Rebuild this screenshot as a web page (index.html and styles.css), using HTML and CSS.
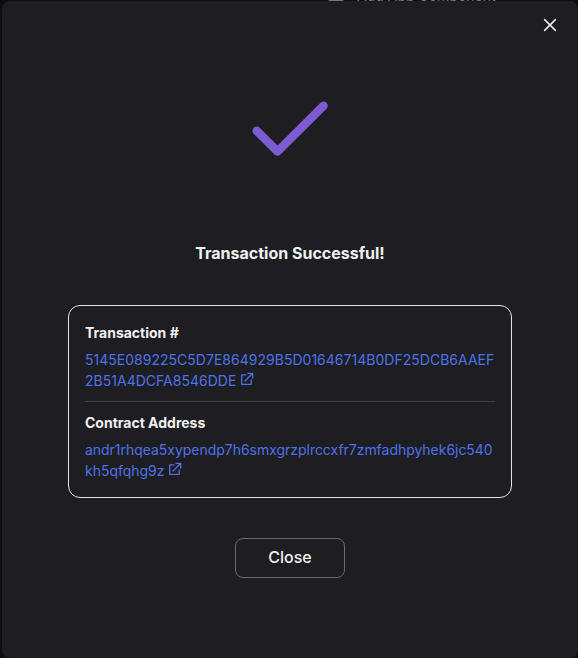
FILE: index.html
```
<!DOCTYPE html>
<html lang="en">
<head>
<meta charset="utf-8">
<title>Transaction Successful</title>
<link rel="stylesheet" href="styles.css">
</head>
<body>
<div class="behind"><span class="behind-icon"></span><span class="behind-text">Add App Component</span></div>
<main class="modal">
  <header class="modal-header">
    <button class="dismiss" aria-label="Dismiss"><svg width="14" height="14" viewBox="0 0 14 14"><path d="M1.6 1.6 12.4 12.4M12.4 1.6 1.6 12.4"/></svg></button>
  </header>
  <svg class="check" width="76" height="56" viewBox="0 0 76 56"><path d="M4.7 29.7 25.5 50.5 71.5 4.7"/></svg>
  <h1>Transaction Successful!</h1>
  <section class="details">
    <div class="entry">
      <h2>Transaction #</h2>
      <a class="hash"><span>5145E089225C5D7E864929B5D01646714B0DF25DCB6AAEF</span><br><span>2B51A4DCFA8546DDE</span><svg class="external" width="14" height="14" viewBox="0 0 14 14"><path d="M6 2.8H1.7V12.3H11.2V8M8 1.3H12.7V6M12.5 1.5 5 9"/></svg></a>
    </div>
    <div class="entry">
      <h2>Contract Address</h2>
      <a class="address"><span>andr1rhqea5xypendp7h6smxgrzplrccxfr7zmfadhpyhek6jc540</span><br><span>kh5qfqhg9z</span><svg class="external" width="14" height="14" viewBox="0 0 14 14"><path d="M6 2.8H1.7V12.3H11.2V8M8 1.3H12.7V6M12.5 1.5 5 9"/></svg></a>
    </div>
  </section>
  <button class="close">Close</button>
</main>
</body>
</html>
```
FILE: styles.css
```
* { box-sizing: border-box; }
body {
  margin: 0;
  height: 658px;
  overflow: hidden;
  background: #0d0d0f;
  font-family: Inter, sans-serif;
  color: #f0f0f0;
}
.behind {
  position: absolute;
  top: -12px;
  left: 328px;
  display: flex;
  gap: 13px;
  height: 13px;
  font-size: 14px;
  line-height: 15px;
  color: #77777a;
}
.behind-icon { width: 16px; height: 13px; background: #77777a; border-radius: 2px; }
.behind-text { width: 140px; white-space: nowrap; }
.modal {
  position: relative;
  display: flex;
  flex-direction: column;
  align-items: center;
  width: 576px;
  height: 657px;
  margin: 1px 0 0 2px;
  background: #1e1d22;
  border-radius: 8px;
}
body::before { content: ""; display: table; }
.modal-header {
  display: flex;
  justify-content: flex-end;
  width: 100%;
  height: 48px;
  padding: 17px 21px 0 0;
}
button { font-family: inherit; color: inherit; background: none; }
.dismiss { width: 14px; height: 14px; padding: 0; border: 0; }
svg { fill: none; stroke-linecap: round; stroke-linejoin: round; }
.dismiss svg { display: block; stroke: #f0f0f0; stroke-width: 1.5; }
.check { margin-top: 52px; stroke: #7c5bd3; stroke-width: 8.5; flex: none; }
h1 {
  margin: 84px 0 0;
  font-size: 16px;
  line-height: 24px;
  font-weight: 700;
}
.details {
  width: 444px;
  height: 193px;
  margin-top: 40px;
  padding: 16px;
  border: 1px solid #e4e4e6;
  border-radius: 12px;
}
.entry + .entry { margin-top: 10px; padding-top: 10px; border-top: 1px solid #414047; }
h2 { margin: 0 0 5px; font-size: 14px; line-height: 22px; font-weight: 700; }
.entry a { display: block; font-size: 14px; line-height: 21px; color: #4d72e8; white-space: nowrap; }
.hash { letter-spacing: 0.015px; }
.address { letter-spacing: -0.03px; }
.external { margin-left: 3.5px; vertical-align: 0; stroke: #4d72e8; stroke-width: 1.3; }
.close {
  width: 110px;
  height: 40px;
  margin-top: 40px;
  padding: 0 0 2px;
  border: 1px solid #616a80;
  border-radius: 8px;
  font-size: 16px;
  font-weight: 500;
}
```
